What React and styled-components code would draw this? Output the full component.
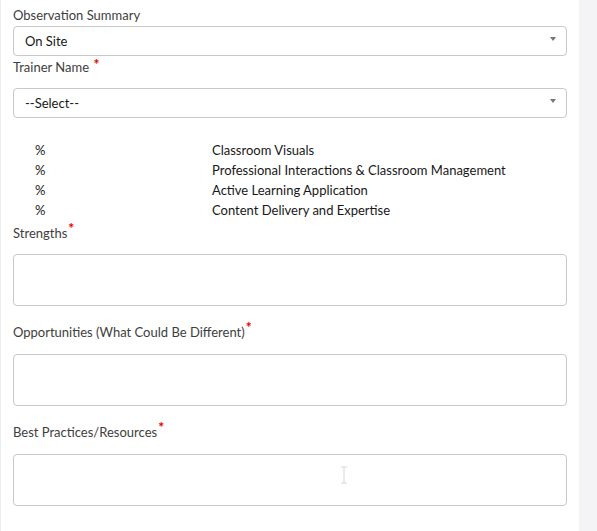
import React from 'react'
import styled, { createGlobalStyle } from 'styled-components'

const GlobalStyle = createGlobalStyle`
  html, body {
    margin: 0;
    padding: 0;
    background: #fff;
  }
  body {
    font-family: Lato, "Open Sans", "Liberation Sans", sans-serif;
    font-size: 13px;
    color: #3e3e3c;
  }
`

const scores = [
  'Classroom Visuals',
  'Professional Interactions & Classroom Management',
  'Active Learning Application',
  'Content Delivery and Expertise',
]

const App = () => {
  return (
    <Page>
      <GlobalStyle />
      <Form>
        <Label>Observation Summary</Label>
        <Select>
          <span>On Site</span>
          <Caret />
        </Select>

        <Label $gap={12} $top={2}>
          Trainer Name <Required $inline>*</Required>
        </Label>
        <Select>
          <span>--Select--</span>
          <Caret />
        </Select>

        <ScoreTable>
          {scores.map((s) => (
            <ScoreRow key={s}>
              <span>%</span>
              <span>{s}</span>
            </ScoreRow>
          ))}
        </ScoreTable>

        <Label $gap={12} $top={4}>
          Strengths<Required>*</Required>
        </Label>
        <TextBox />

        <Label $gap={13} $top={17}>
          Opportunities (What Could Be Different)<Required>*</Required>
        </Label>
        <TextBox />

        <Label $gap={13} $top={17}>
          Best Practices/Resources<Required>*</Required>
        </Label>
        <TextBox>
          <Cursor width="8" height="18" viewBox="0 0 8 18">
            <path d="M1 1h6M4 1v16M1 17h6" stroke="#d8d8d8" strokeWidth="1" fill="none" />
          </Cursor>
        </TextBox>
      </Form>
      <Scrollbar />
    </Page>
  )
}

export default App

const Page = styled.div`
  display: flex;
  min-height: 531px;
`

const Form = styled.div`
  flex: 1;
  display: flex;
  flex-direction: column;
  padding: 6px 12px 24px 12px;
  border-left: 1px solid #ededed;
`

const Label = styled.div`
  height: 18px;
  line-height: 18px;
  margin-top: ${(p) => p.$top || 0}px;
  margin-bottom: ${(p) => p.$gap || 2}px;
`

const Required = styled.span`
  color: #e00;
  font-weight: 900;
  font-size: 14px;
  line-height: 0;
  position: relative;
  top: ${(p) => (p.$inline ? '-3px' : '-5px')};
  margin-left: 1px;
`

const Select = styled.div`
  display: flex;
  align-items: center;
  justify-content: space-between;
  height: 30px;
  box-sizing: border-box;
  border: 1px solid #c9c9c9;
  border-radius: 4px;
  padding: 0 10px 0 11px;
  background: #fff;
  color: #181818;
`

const Caret = styled.span`
  width: 0;
  height: 0;
  border-left: 3px solid transparent;
  border-right: 3px solid transparent;
  border-top: 4px solid #777;
  margin-bottom: 4px;
`

const ScoreTable = styled.div`
  display: flex;
  flex-direction: column;
  margin-top: 22px;
`

const ScoreRow = styled.div`
  display: grid;
  grid-template-columns: 177px 1fr;
  padding-left: 22px;
  line-height: 20px;
  color: #181818;
`

const TextBox = styled.div`
  position: relative;
  height: 52px;
  box-sizing: border-box;
  border: 1px solid #c9c9c9;
  border-radius: 4px;
  background: #fff;
`

const Cursor = styled.svg`
  position: absolute;
  left: 326px;
  top: 11px;
`

const Scrollbar = styled.div`
  width: 18px;
  flex-shrink: 0;
  background: #f4f4f6;
`
